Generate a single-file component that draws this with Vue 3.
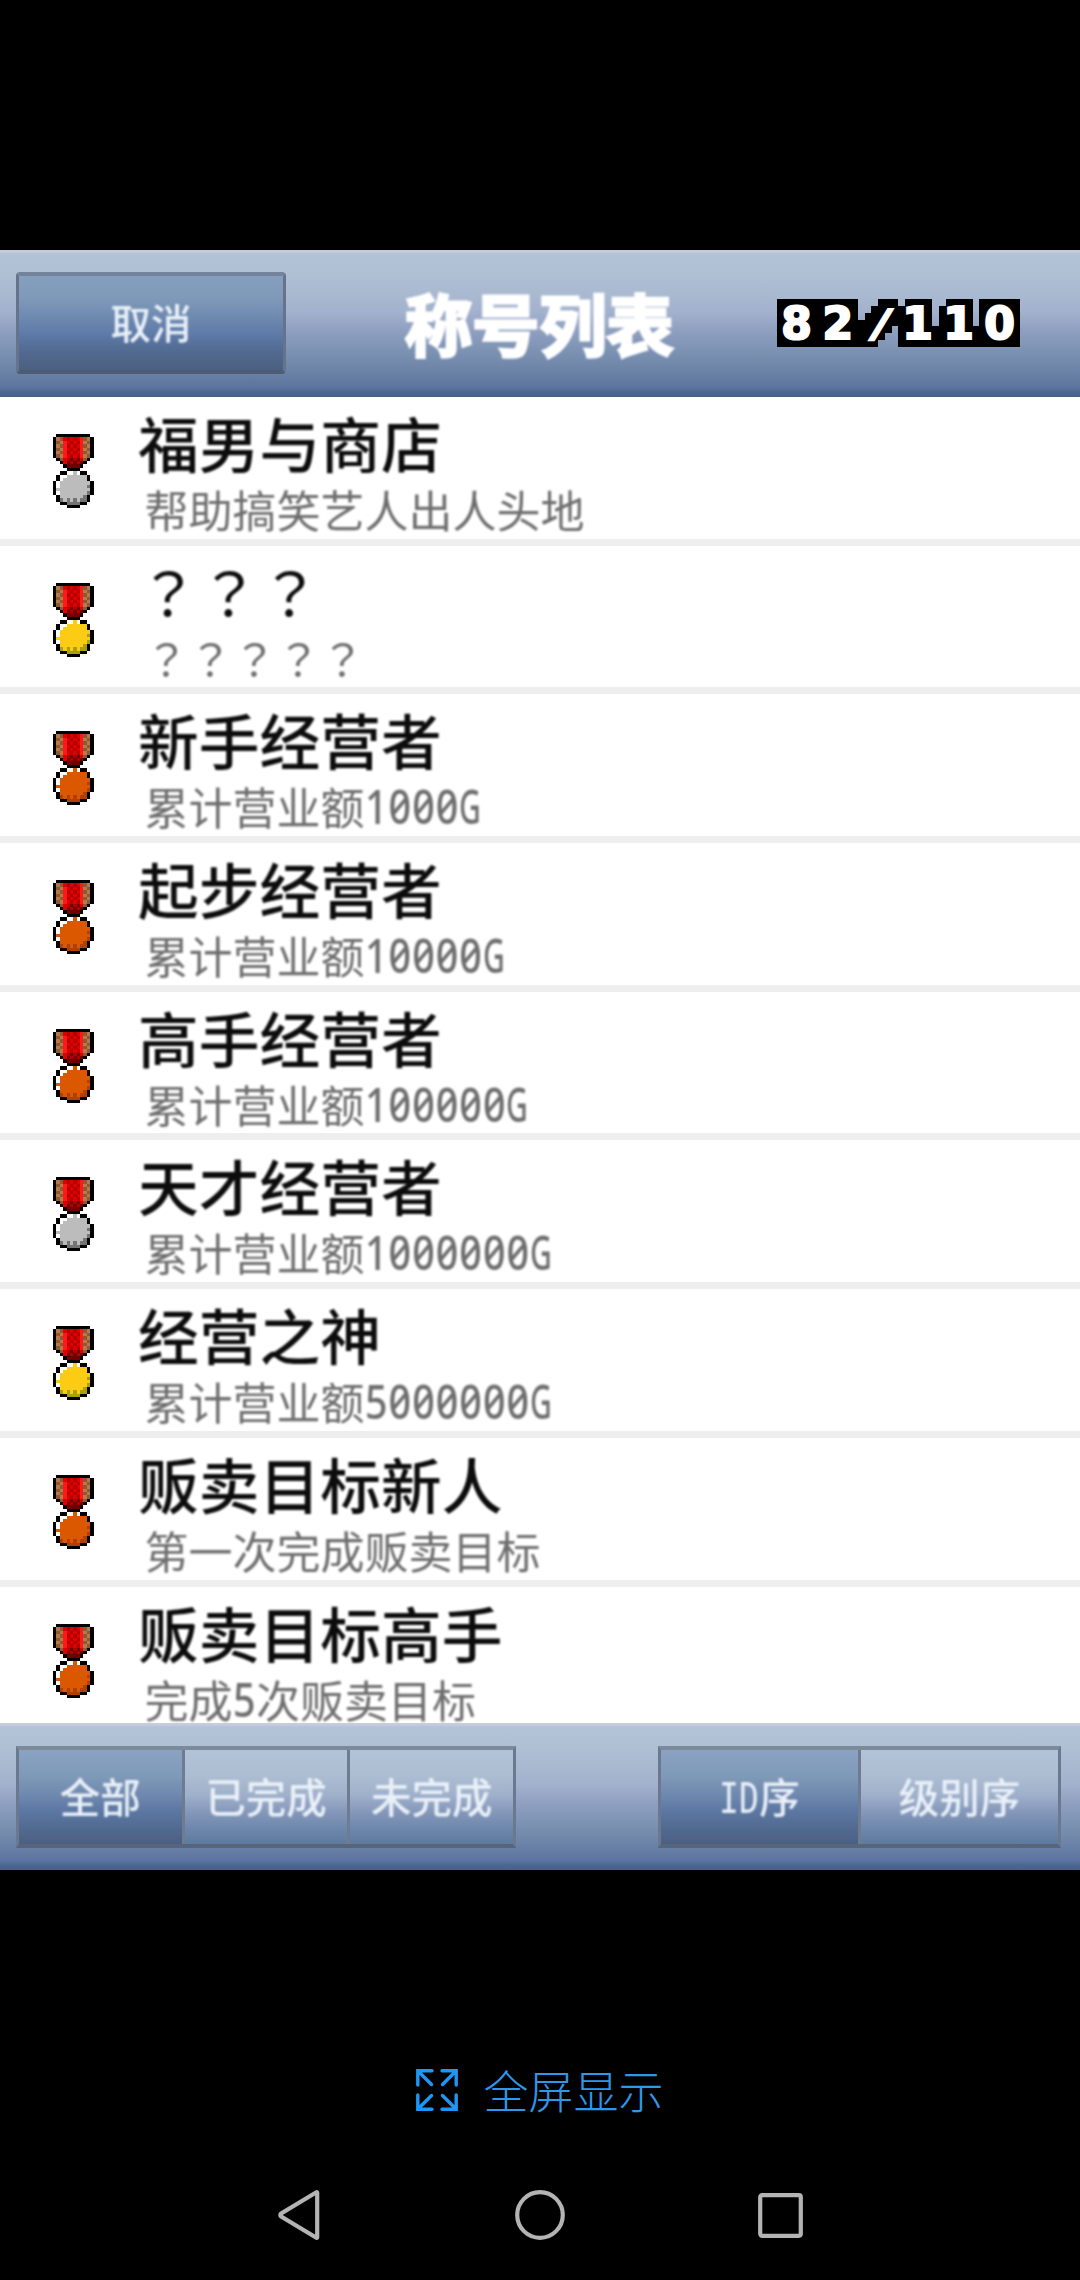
<script setup>
const pixels = [
  '.KKKKKKKKKK.',
  'KTBRDRDRLBTK',
  'KBTLRDRDLTBK',
  'KTBLDRDRLBTK',
  'KBTLRDRDLTBK',
  'KTBLDRDRLBTK',
  'KBTLRDRDLTBK',
  '.KBRDMDMRBK.',
  '..KRMDMDMK..',
  '...KMMMMK...',
  '....KKKK....',
  '..KKWWFWKK..',
  '.KWWFFFFFFK.',
  '.KWFFFFFFFK.',
  'KWFFFFFFFFFK',
  'KWFFFFFFFFSK',
  'KFFFFFFFFFFK',
  'KWFFFFFFFFSK',
  '.KFFFFFFFSK.',
  '.KSFSFSFSSK.',
  '..KKSSSSKK..',
  '....KKKK....',
]
const base = {
  K: '#000000', T: '#b87848', B: '#8a5a34', R: '#e00000', D: '#b00000',
  L: '#ff1818', M: '#700000', W: '#ffffff',
}
const metals = {
  silver: { F: '#bcbcbc', S: '#747474' },
  gold: { F: '#fccc14', S: '#a8a010' },
  bronze: { F: '#dc5800', S: '#b04008' },
}
function cells(kind) {
  const pal = { ...base, ...metals[kind] }
  const out = []
  pixels.forEach((row, y) => {
    ;[...row].forEach((c, x) => {
      if (c !== '.') out.push({ x, y, fill: pal[c] })
    })
  })
  return out
}
const medals = { silver: cells('silver'), gold: cells('gold'), bronze: cells('bronze') }

const rows = [
  { medal: 'silver', title: '福男与商店', desc: '帮助搞笑艺人出人头地' },
  { medal: 'gold', title: '？？？', desc: '？？？？？', unknown: true },
  { medal: 'bronze', title: '新手经营者', desc: '累计营业额1000G' },
  { medal: 'bronze', title: '起步经营者', desc: '累计营业额10000G' },
  { medal: 'bronze', title: '高手经营者', desc: '累计营业额100000G' },
  { medal: 'silver', title: '天才经营者', desc: '累计营业额1000000G' },
  { medal: 'gold', title: '经营之神', desc: '累计营业额5000000G' },
  { medal: 'bronze', title: '贩卖目标新人', desc: '第一次完成贩卖目标' },
  { medal: 'bronze', title: '贩卖目标高手', desc: '完成5次贩卖目标' },
]
const DIGIT_WIDTH = 23.6
const runs = (s) =>
  s.match(/[0-9]+|G|[^0-9G]+/g).map((text) => {
    const kind = /[0-9]/.test(text) ? 'num' : text === 'G' ? 'cap' : 'han'
    return { text, kind, style: kind === 'num' ? { width: text.length * DIGIT_WIDTH + 'px' } : null }
  })
</script>

<template>
  <div class="screen">
    <header class="bar top">
      <button class="cancel"><span class="soft">取消</span></button>
      <h1 class="soft">称号列表</h1>
      <svg class="count" width="243" height="48" viewBox="7 9 243 48">
        <polygon points="7,9 88,9 88,30 94.7,30 94.7,23 101.3,23 101.3,16 108,16 108,9 128,9 128,16 134.7,16 134.7,9 162,9 162,36 169,36 169,16 176,16 176,9 203,9 203,36 209,36 209,9 250,9 250,57 128,57 128,36 122,36 122,43 115,43 115,50 108,50 108,57 7,57" fill="#000" shape-rendering="crispEdges" />
        <text y="49.2" x="26.5 67.7" text-anchor="middle">82</text>
        <text class="slash" transform="translate(108.5 47) scale(1.35 1) skewX(-8)" text-anchor="middle">/</text>
        <text y="49.2" x="147.5 188.5 229.5" text-anchor="middle">110</text>
      </svg>
    </header>

    <main class="list">
      <section v-for="(r, i) in rows" :key="i" class="row">
        <svg class="medal" width="40.5" height="74.25" viewBox="0 0 12 22" shape-rendering="crispEdges">
          <rect v-for="(p, k) in medals[r.medal]" :key="k" :x="p.x" :y="p.y" width="1" height="1" :fill="p.fill" />
        </svg>
        <div class="copy soft" :class="{ unknown: r.unknown }">
          <div class="title">{{ r.title }}</div>
          <div class="desc"><span v-for="(p, k) in runs(r.desc)" :key="k" :class="p.kind" :style="p.style">{{ p.text }}</span></div>
        </div>
      </section>
    </main>

    <footer class="bar bottom">
      <div class="group filters">
        <button class="seg on"><span class="soft">全部</span></button>
        <button class="seg"><span class="soft">已完成</span></button>
        <button class="seg"><span class="soft">未完成</span></button>
      </div>
      <div class="group sorts">
        <button class="seg on"><span class="soft idtxt"><b>ID</b><span>序</span></span></button>
        <button class="seg"><span class="soft">级别序</span></button>
      </div>
    </footer>

    <div class="full">
      <svg width="42" height="42" viewBox="0 0 42 42" fill="none" stroke="#1e96f5" stroke-width="3.4" stroke-linecap="round">
        <path d="M1.8 16V1.8H16M2.5 2.5L15.5 15.5M26 1.8H40.2V16M39.5 2.5L26.5 15.5M1.8 26V40.2H16M2.5 39.5L15.5 26.5M26 40.2H40.2V26M39.5 39.5L26.5 26.5" />
      </svg>
      <span>全屏显示</span>
    </div>

    <nav class="nav">
      <svg width="43" height="50" viewBox="0 0 43 50"><path d="M39.2 2.6V47.4Q39.2 48.2 38.4 47.7L3.2 26.6Q1.4 25 3.2 23.4L38.4 2.3Q39.2 1.8 39.2 2.6Z" /></svg>
      <svg width="50" height="50" viewBox="0 0 50 50"><circle cx="25" cy="25" r="22.8" /></svg>
      <svg width="45" height="45" viewBox="0 0 45 45"><rect x="2.2" y="2.2" width="40.6" height="40.6" rx="2" /></svg>
    </nav>
  </div>
</template>

<style>
body {
  background: #000;
}
</style>

<style scoped>
.screen {
  width: 1080px;
  height: 2280px;
  box-sizing: border-box;
  padding-top: 250px;
  background: #000;
  overflow: hidden;
  display: flex;
  flex-direction: column;
  font-family: 'Noto Sans CJK SC', sans-serif;
}
button {
  padding: 0;
  margin: 0;
  font: inherit;
  display: flex;
  align-items: center;
  justify-content: center;
  box-sizing: border-box;
}
.soft {
  filter: blur(0.8px);
}
.bar {
  flex: none;
  height: 147px;
  display: flex;
  align-items: flex-start;
  box-sizing: border-box;
  background: linear-gradient(#c6ccdc 0, #c6ccdc 2px, #b2c2d7 4px, #b1c1d5 20px, #a9bad0 42px, #a2b1cd 62px, #8e9ebf 82px, #7d93b4 100px, #6c84a7 120px, #5c749e 138px, #4b6792 142px, #4a6088 147px);
}
.top {
  padding: 22px 58px 0 16px;
}
.cancel {
  flex: none;
  width: 270px;
  height: 102px;
  border: 3px solid;
  border-top-width: 4px;
  border-bottom-width: 4px;
  border-color: #73839a #65748b #4c5c75;
  border-radius: 4px;
  background: linear-gradient(#869fbe 0, #7f99ba 24%, #6c88ae 46%, #5e7aa8 62%, #536d95 76%, #4b5f80 100%);
  color: #e9f0f8;
  font-size: 40.5px;
  font-weight: 500;
  padding-bottom: 4px;
}
h1 {
  flex: none;
  margin: 1px 0 0 119px;
  width: 280px;
  font-size: 67.2px;
  line-height: 98px;
  font-weight: 700;
  color: #fff;
  white-space: nowrap;
  -webkit-text-stroke: 3px #fff;
}
.count {
  flex: none;
  margin: 27px 0 0 92px;
}
.count text {
  font-family: 'DejaVu Sans', sans-serif;
  font-weight: 700;
  font-size: 44px;
  fill: #fff;
  stroke: #fff;
  stroke-width: 2.2px;
}
.count .slash {
  font-size: 39px;
  stroke-width: 1px;
}
.list {
  flex: none;
  height: 1326px;
  overflow: hidden;
  background: #fff;
}
.row {
  height: 148.7px;
  box-sizing: border-box;
  border-bottom: 7px solid #eee;
  padding-left: 53px;
  display: flex;
}
.medal {
  flex: none;
  margin-top: 37px;
}
.copy {
  margin-left: 44.5px;
}
.title {
  height: 84px;
  line-height: 90px;
  font-size: 60.75px;
  font-weight: 500;
  color: #0c0c0c;
  white-space: nowrap;
}
.desc {
  padding-left: 6.5px;
  height: 56px;
  line-height: 56px;
  font-size: 44px;
  font-weight: 400;
  color: #6e6e6e;
  white-space: nowrap;
  display: flex;
}
.unknown .title,
.unknown .desc {
  font-family: 'Noto Sans CJK JP', sans-serif;
  font-weight: 400;
}
.num,
.cap {
  width: 23.6px;
  font-family: 'Noto Sans', sans-serif;
  font-size: 47px;
  font-feature-settings: 'zero';
  letter-spacing: 1.2px;
  transform: scaleX(0.84);
  transform-origin: 0 50%;
  font-weight: 500;
}
.cap {
  transform: scaleX(0.64);
}
.bottom {
  padding: 23px 19px 0 16px;
  justify-content: space-between;
}
.group {
  display: flex;
  height: 102px;
  box-sizing: border-box;
  border: 3px solid;
  border-top-width: 4px;
  border-bottom-width: 4px;
  border-color: #7d8a9c #6a7890 #56657c;
}
.filters {
  width: 500px;
}
.sorts {
  width: 403px;
}
.seg {
  flex: 1;
  border: 0;
  border-right: 3px solid #6f7c90;
  background: linear-gradient(#b3c3d7 0, #aebed2 25%, #9fb0cb 48%, #8597ba 66%, #6f89ad 82%, #5d7a9f 100%);
  color: #e9f0f8;
  font-size: 40.5px;
  font-weight: 500;
  padding-bottom: 4px;
}
.seg:last-child {
  border-right: 0;
}
.seg.on {
  background: linear-gradient(#8ba3c3 0, #7f99b8 28%, #6d86ad 50%, #5c78a3 64%, #536c93 80%, #4c5f82 100%);
}
.idtxt {
  display: flex;
  align-items: baseline;
}
.idtxt b {
  width: 40px;
  font-family: 'DejaVu Sans Mono', monospace;
  font-weight: 400;
  font-size: 43px;
  transform: scaleX(0.77);
  transform-origin: 0 50%;
}
.full {
  height: 60px;
  margin-top: 190px;
  display: flex;
  align-items: center;
  justify-content: center;
  gap: 25px;
  font-size: 45px;
  font-weight: 300;
  line-height: 58px;
  color: #2e97ea;
}
.nav {
  margin-top: 70px;
  padding: 0 277px 0 278px;
  height: 50px;
  display: flex;
  align-items: center;
  justify-content: space-between;
}
.nav svg {
  fill: none;
  stroke: #b4b4b4;
  stroke-width: 4.2;
}
</style>
